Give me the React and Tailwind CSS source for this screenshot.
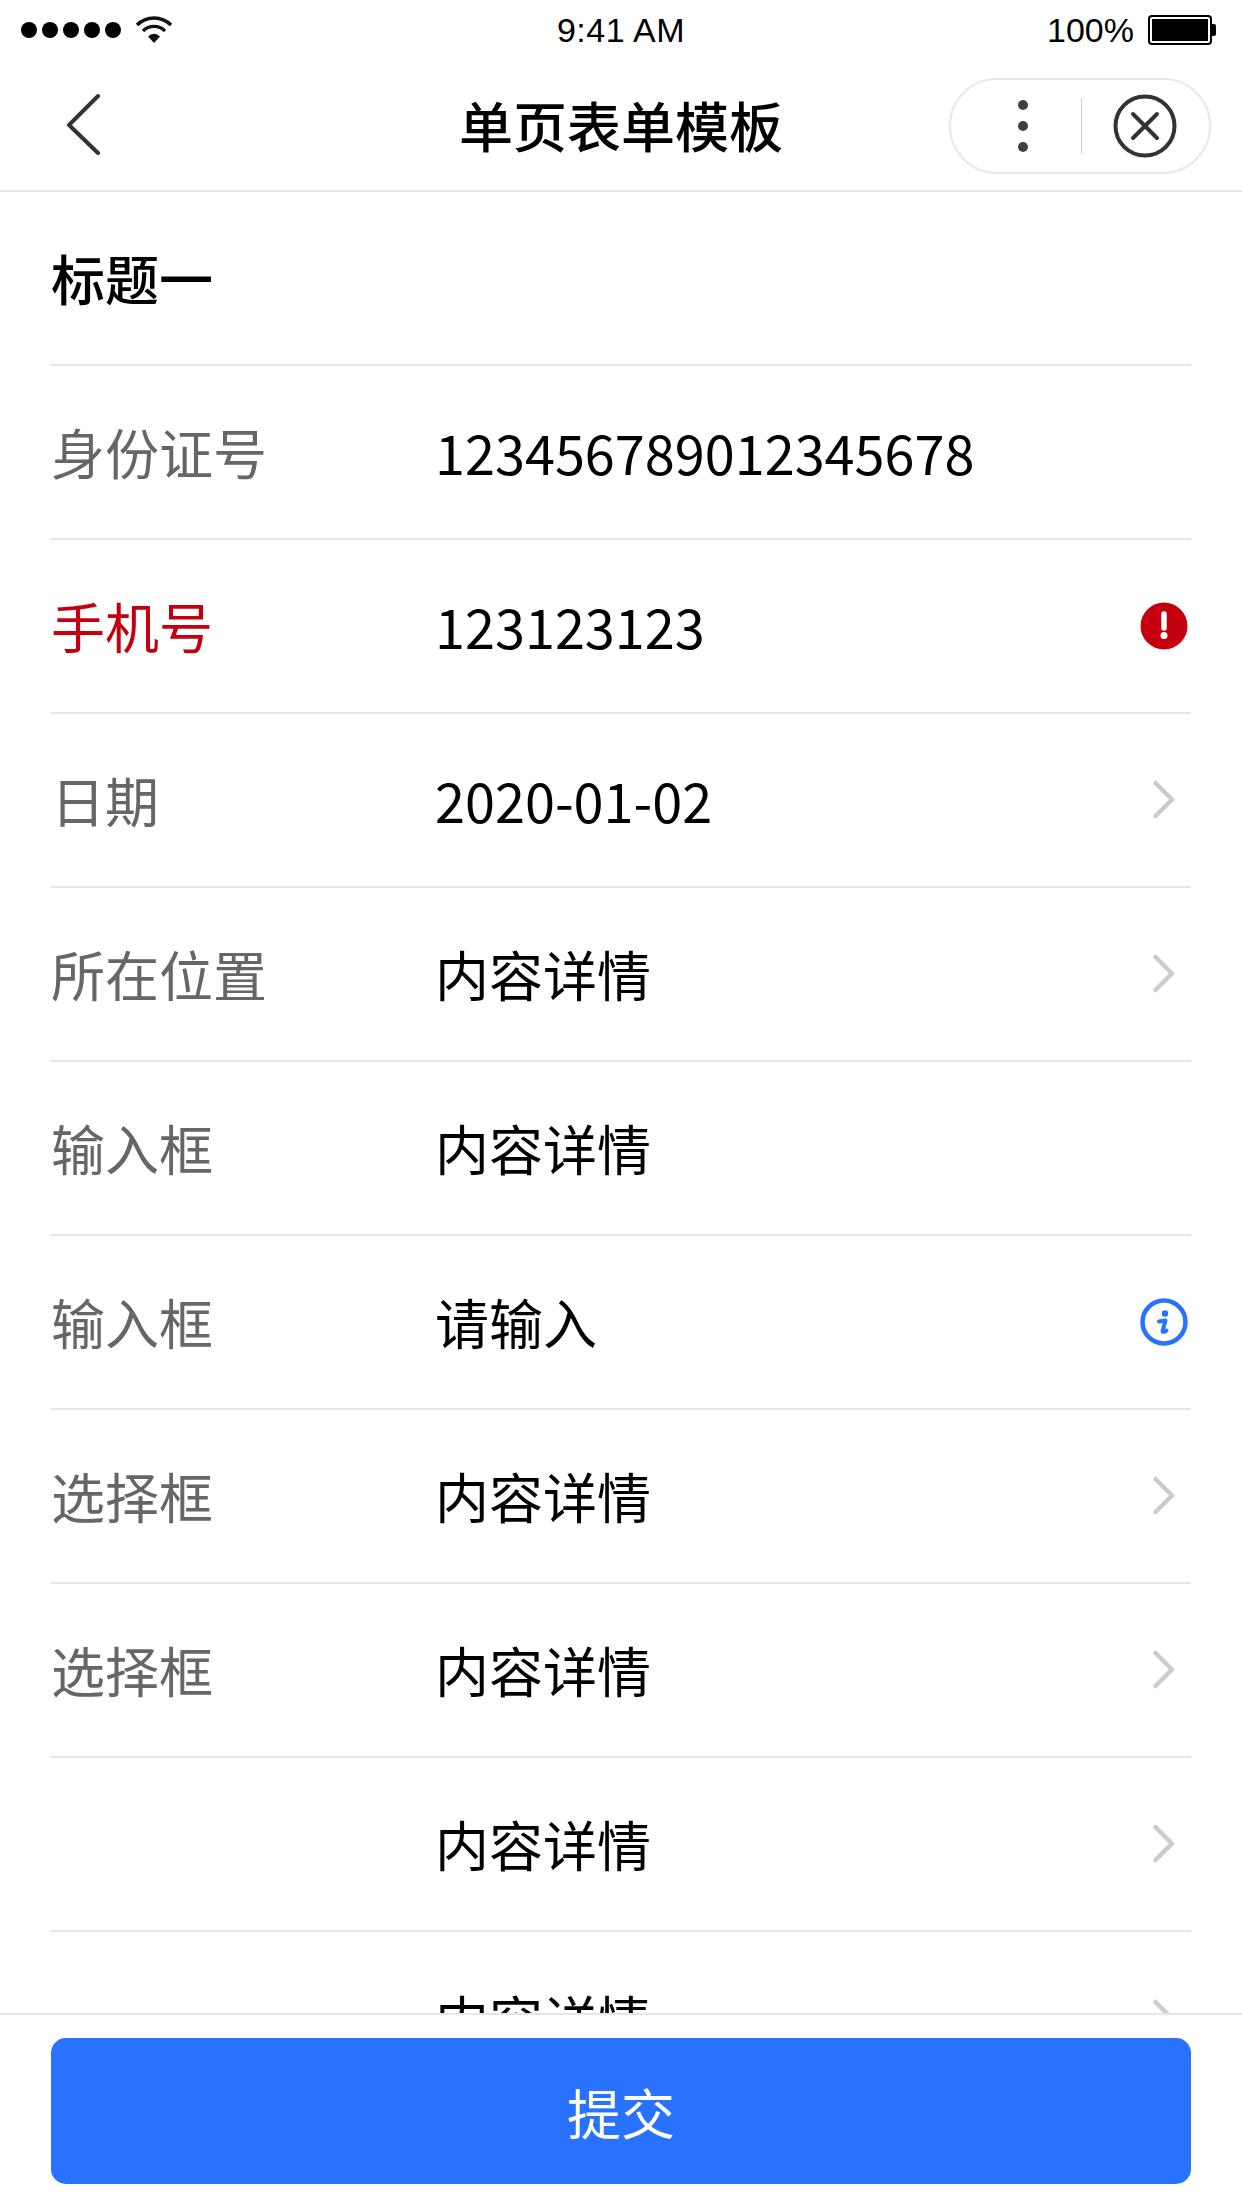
const CJK = { fontFamily: '"Noto Sans CJK SC", sans-serif' };

function Chevron() {
  return (
    <svg width="24" height="40" viewBox="0 0 24 40" fill="none">
      <path d="M3.5 3 L20 19.5 L3.5 36" stroke="#cccccc" strokeWidth="4.5" strokeLinecap="round" strokeLinejoin="round" />
    </svg>
  );
}

function ErrorIcon() {
  return (
    <svg width="48" height="48" viewBox="0 0 48 48">
      <circle cx="24" cy="24" r="23.5" fill="#c40010" />
      <path d="M24 12 V26" stroke="#fff" strokeWidth="5.5" strokeLinecap="round" />
      <circle cx="24" cy="33.5" r="3.5" fill="#fff" />
    </svg>
  );
}

function InfoIcon() {
  return (
    <svg width="48" height="48" viewBox="0 0 48 48" fill="none">
      <circle cx="24" cy="24" r="21.5" stroke="#2972ff" strokeWidth="4.5" />
      <circle cx="25" cy="15.5" r="3.2" fill="#2972ff" />
      <path d="M19 23.5 L25.5 22.5 L22.5 33 Q22.5 35 26.5 32.5" stroke="#2972ff" strokeWidth="4" strokeLinecap="round" strokeLinejoin="round" />
    </svg>
  );
}

function Row({ label, value, labelClass = "text-[#666666]", icon, partial, clipped }) {
  return (
    <div className={`h-[174px] shrink-0 flex items-center ${partial ? "" : "border-b-2 border-[#e6e6e6]"} mx-[51px]`}>
      <div className={`w-[384px] shrink-0 text-[54px] leading-[76px] ${labelClass}`}>{label}</div>
      <div className="flex-1 min-w-0 text-[54px] leading-[76px] text-black">{value}</div>
      {icon && <div className="w-[48px] flex justify-center shrink-0 mr-[3px]">{icon}</div>}
    </div>
  );
}

export default function App() {
  return (
    <div className="w-[1242px] h-[2208px] bg-white flex flex-col overflow-hidden" style={CJK}>
      <div className="h-[60px] shrink-0 relative flex items-center justify-between pl-[21px] pr-[26px]" style={{ fontFamily: '"Liberation Sans", sans-serif' }}>
        <div className="flex items-center gap-[14px]">
          <div className="flex gap-[5px]">
            {[0, 1, 2, 3, 4].map((i) => (
              <span key={i} className="w-[16px] h-[16px] rounded-full bg-black block" />
            ))}
          </div>
          <svg width="38" height="30" viewBox="0 0 38 30" fill="none">
            <path d="M2 10 A24 24 0 0 1 36 10" stroke="#111" strokeWidth="3.4" />
            <path d="M8 16 A15.5 15.5 0 0 1 30 16" stroke="#111" strokeWidth="3.4" />
            <path d="M13 21.5 A8 8 0 0 1 25 21.5 L19 28 Z" fill="#111" />
          </svg>
        </div>
        <div className="absolute left-0 right-0 text-center text-[34px] leading-[60px] text-black tracking-[0.5px]">9:41 AM</div>
        <div className="flex items-center gap-[14px]">
          <span className="text-[34px] leading-[60px] text-black">100%</span>
          <div className="flex items-center">
            <div className="w-[64px] h-[30px] border-2 border-black rounded-[4px] p-[2px]">
              <div className="w-full h-full bg-black" />
            </div>
            <div className="w-[4px] h-[12px] bg-black rounded-r-[2px]" />
          </div>
        </div>
      </div>

      <div className="h-[132px] shrink-0 border-b-2 border-[#e6e6e6] relative flex items-center justify-center">
        <svg className="absolute left-[66px] top-[33px]" width="36" height="62" viewBox="0 0 36 62" fill="none">
          <path d="M32 3 L3 32 L32 60" stroke="#333333" strokeWidth="4" strokeLinecap="round" strokeLinejoin="round" />
        </svg>
        <div className="text-[54px] leading-[76px] font-medium text-black">单页表单模板</div>
        <div className="absolute left-[949px] top-[18px] w-[262px] h-[96px] rounded-full border-2 border-[#e8e8e8] flex items-center">
          <div className="w-[130px] h-full flex flex-col items-center justify-center gap-[11px] pl-[14px]">
            {[0, 1, 2].map((i) => (
              <span key={i} className="w-[10px] h-[10px] rounded-full bg-[#404040] block" />
            ))}
          </div>
          <div className="w-px h-[56px] bg-[#cccccc]" />
          <div className="flex-1 flex justify-center pr-[2px]">
            <svg width="64" height="64" viewBox="0 0 64 64" fill="none">
              <circle cx="32" cy="32" r="29.5" stroke="#333333" strokeWidth="4" />
              <path d="M20 20 L44 44 M44 20 L20 44" stroke="#333333" strokeWidth="4" strokeLinecap="round" />
            </svg>
          </div>
        </div>
      </div>

      <div className="flex-1 min-h-0 overflow-hidden flex flex-col">
        <div className="h-[174px] shrink-0 mx-[51px] border-b-2 border-[#e6e6e6] flex items-center text-[54px] leading-[76px] font-medium text-black">标题一</div>
        <Row label="身份证号" value="123456789012345678" />
        <Row label="手机号" labelClass="text-[#c40010]" value="123123123" icon={<ErrorIcon />} />
        <Row label="日期" value="2020-01-02" icon={<Chevron />} />
        <Row label="所在位置" value="内容详情" icon={<Chevron />} />
        <Row label="输入框" value="内容详情" />
        <Row label="输入框" value="请输入" icon={<InfoIcon />} />
        <Row label="选择框" value="内容详情" icon={<Chevron />} />
        <Row label="选择框" value="内容详情" icon={<Chevron />} />
        <div className="h-[174px] shrink-0 mx-[51px] border-b-2 border-[#e6e6e6] flex items-center">
          <div className="w-[384px] shrink-0" />
          <div className="flex-1 text-[54px] leading-[76px] text-black">内容详情</div>
          <div className="w-[48px] flex justify-center mr-[3px]"><Chevron /></div>
        </div>
        <div className="h-[174px] shrink-0 ml-[435px] mr-[51px] flex items-center">
          <div className="flex-1 text-[54px] leading-[76px] text-black">内容详情</div>
          <div className="w-[48px] flex justify-center mr-[3px]"><Chevron /></div>
        </div>
      </div>

      <div className="h-[195px] shrink-0 border-t-2 border-[#e6e6e6] bg-white pt-[23px] px-[51px]">
        <div className="h-[146px] rounded-[15px] bg-[#2972ff] text-white flex items-center justify-center text-[54px]">提交</div>
      </div>
    </div>
  );
}
